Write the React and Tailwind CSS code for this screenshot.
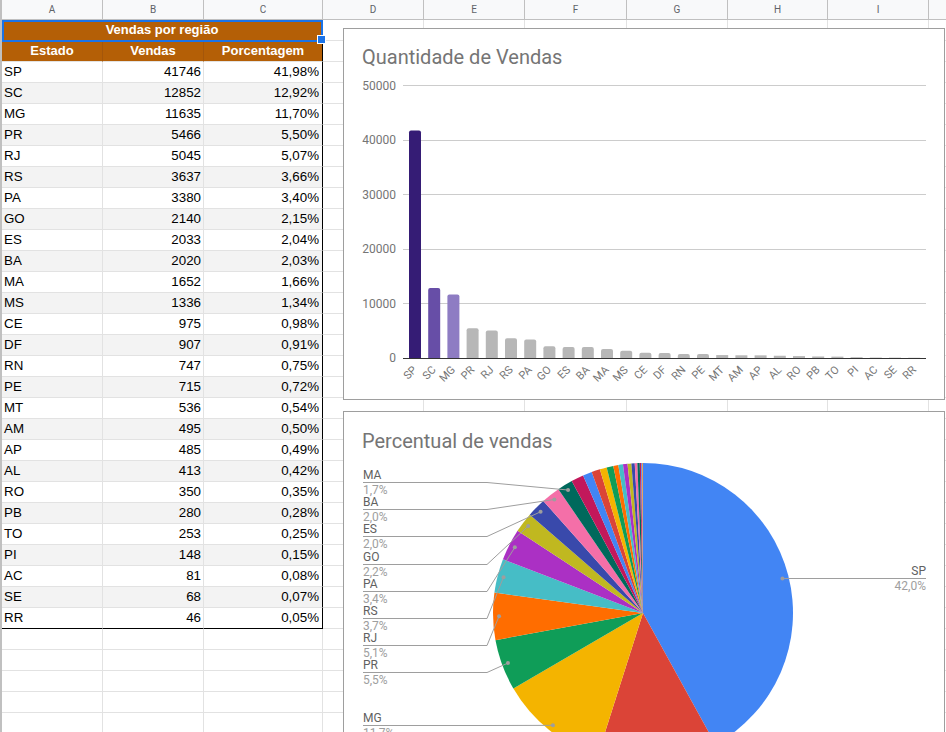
import React from "react";

const DATA = [
  ["SP", 41746, "41,98%"], ["SC", 12852, "12,92%"], ["MG", 11635, "11,70%"], ["PR", 5466, "5,50%"],
  ["RJ", 5045, "5,07%"], ["RS", 3637, "3,66%"], ["PA", 3380, "3,40%"], ["GO", 2140, "2,15%"],
  ["ES", 2033, "2,04%"], ["BA", 2020, "2,03%"], ["MA", 1652, "1,66%"], ["MS", 1336, "1,34%"],
  ["CE", 975, "0,98%"], ["DF", 907, "0,91%"], ["RN", 747, "0,75%"], ["PE", 715, "0,72%"],
  ["MT", 536, "0,54%"], ["AM", 495, "0,50%"], ["AP", 485, "0,49%"], ["AL", 413, "0,42%"],
  ["RO", 350, "0,35%"], ["PB", 280, "0,28%"], ["TO", 253, "0,25%"], ["PI", 148, "0,15%"],
  ["AC", 81, "0,08%"], ["SE", 68, "0,07%"], ["RR", 46, "0,05%"],
];

const RIGHT_COLS = [
  { l: "D", w: "w-[101px]" },
  { l: "E", w: "w-[101px]" },
  { l: "F", w: "w-[102px]" },
  { l: "G", w: "w-[101px]" },
  { l: "H", w: "w-[100px]" },
  { l: "I", w: "w-[101px]" },
];

function EmptyRight() {
  return (
    <>
      {RIGHT_COLS.map((c) => (
        <div key={c.l} className={`${c.w} shrink-0 h-full border-r border-b border-[#e2e2e2] bg-white`} />
      ))}
      <div className="flex-1 h-full border-b border-[#e2e2e2] bg-white" />
    </>
  );
}

function HeaderRow() {
  const cols = [
    { l: "A", w: "w-[101px]" },
    { l: "B", w: "w-[101px]" },
    { l: "C", w: "w-[119px]" },
    ...RIGHT_COLS,
  ];
  return (
    <div className="flex h-[20px] border-b border-[#c0c0c0] bg-[#f8f9fa]">
      {cols.map((c) => (
        <div
          key={c.l}
          className={`${c.w} shrink-0 h-full border-r border-[#c0c0c0] flex items-center justify-center text-[10px] leading-[19px] text-[#5f6368] font-['Roboto',sans-serif]`}
        >
          {c.l}
        </div>
      ))}
      <div className="flex-1 h-full" />
    </div>
  );
}

function TitleRow() {
  return (
    <div className="flex h-[21px]">
      <div className="w-[321px] shrink-0 h-full bg-[#b45f06] border-r border-b border-[#b45f06] text-white font-bold text-[13px] leading-[20px] text-center">
        Vendas por região
      </div>
      <EmptyRight />
    </div>
  );
}

function ColHeadRow() {
  return (
    <div className="flex h-[21px]">
      <div className="w-[101px] shrink-0 h-full bg-[#b45f06] border-r border-b border-r-[#a4560a] border-b-[#e2e2e2] text-white font-bold text-[13px] leading-[20px] text-center">
        Estado
      </div>
      <div className="w-[101px] shrink-0 h-full bg-[#b45f06] border-r border-b border-r-[#a4560a] border-b-[#e2e2e2] text-white font-bold text-[13px] leading-[20px] text-center">
        Vendas
      </div>
      <div className="w-[119px] shrink-0 h-full bg-[#b45f06] border-r border-b border-r-black border-b-[#e2e2e2] text-white font-bold text-[13px] leading-[20px] text-center">
        Porcentagem
      </div>
      <EmptyRight />
    </div>
  );
}

function DataRow({ d, i, last }) {
  const bg = i % 2 === 1 ? "bg-[#f3f3f3]" : "bg-white";
  const bb = last ? "border-b-black" : "border-b-[#e2e2e2]";
  return (
    <div className="flex h-[21px]">
      <div className={`w-[101px] shrink-0 h-full ${bg} border-r border-b border-r-[#e2e2e2] ${bb} text-[13.33px] leading-[20px] text-black pl-[2px]`}>
        {d[0]}
      </div>
      <div className={`w-[101px] shrink-0 h-full ${bg} border-r border-b border-r-[#e2e2e2] ${bb} text-[13.33px] leading-[20px] text-black text-right pr-[2px]`}>
        {d[1]}
      </div>
      <div className={`w-[119px] shrink-0 h-full ${bg} border-r border-b border-r-black ${bb} text-[13.33px] leading-[20px] text-black text-right pr-[3px]`}>
        {d[2]}
      </div>
      <EmptyRight />
    </div>
  );
}

function EmptyRow() {
  return (
    <div className="flex h-[21px]">
      <div className="w-[101px] shrink-0 h-full border-r border-b border-[#e2e2e2] bg-white" />
      <div className="w-[101px] shrink-0 h-full border-r border-b border-[#e2e2e2] bg-white" />
      <div className="w-[119px] shrink-0 h-full border-r border-b border-[#e2e2e2] bg-white" />
      <EmptyRight />
    </div>
  );
}

function BarChart() {
  const k = 0.00545;
  const base = 358;
  const gy = (v) => Math.floor(base - v * k) + 0.5;
  const colors = ["#351c75", "#674ea7", "#8e7cc3"];
  return (
    <svg width="600" height="326" viewBox="344 73 600 326" className="block">
      {[10000, 20000, 30000, 40000, 50000].map((v) => (
        <line key={v} x1="403" x2="926" y1={gy(v)} y2={gy(v)} stroke="#cccccc" strokeWidth="1" />
      ))}
      {[0, 10000, 20000, 30000, 40000, 50000].map((v) => (
        <text key={v} x="396" y={base - v * k + 4.3} textAnchor="end" fontSize="12" fill="#757575" fontFamily="Roboto, sans-serif">
          {v}
        </text>
      ))}
      {DATA.map((d, i) => {
        const cx = 415 + 19.2 * i;
        const x = cx - 6;
        const h = d[1] * k;
        const top = base - h;
        const fill = colors[i] || "#b7b7b7";
        if (h < 3) return <rect key={d[0]} x={x} y={top} width="12" height={h} fill={fill} />;
        return (
          <path
            key={d[0]}
            d={`M${x},${base} V${top + 2} Q${x},${top} ${x + 2},${top} H${x + 10} Q${x + 12},${top} ${x + 12},${top + 2} V${base} Z`}
            fill={fill}
          />
        );
      })}
      <line x1="403" x2="926" y1="358.5" y2="358.5" stroke="#333333" strokeWidth="1" />
      {DATA.map((d, i) => {
        const ax = 415 + 19.2 * i + 2.5;
        const ay = 370.5;
        return (
          <text
            key={d[0]}
            x={ax}
            y={ay}
            textAnchor="end"
            fontSize="11"
            fill="#757575"
            fontFamily="Roboto, sans-serif"
            transform={`rotate(-45 ${ax} ${ay})`}
          >
            {d[0]}
          </text>
        );
      })}
    </svg>
  );
}

const PALETTE = [
  "#4285F4", "#DB4437", "#F4B400", "#0F9D58", "#FF6D00", "#46BDC6",
  "#AB30C4", "#C0B820", "#3949AB", "#F46FA8", "#00695C", "#C2185B",
];

function PieChart() {
  const cx = 643, cy = 613, r = 150;
  const total = DATA.reduce((s, d) => s + d[1], 0);
  const pt = (a, rr) => [cx + rr * Math.sin(a), cy - rr * Math.cos(a)];
  let acc = 0;
  const slices = [];
  const mids = {};
  DATA.forEach((d, i) => {
    const a0 = (acc / total) * Math.PI * 2;
    acc += d[1];
    const a1 = (acc / total) * Math.PI * 2;
    const [x0, y0] = pt(a0, r);
    const [x1, y1] = pt(a1, r);
    const large = a1 - a0 > Math.PI ? 1 : 0;
    slices.push(
      <path
        key={d[0]}
        d={`M${cx},${cy} L${x0},${y0} A${r},${r} 0 ${large} 1 ${x1},${y1} Z`}
        fill={PALETTE[i % 12]}
      />
    );
    mids[d[0]] = pt((a0 + a1) / 2, 144);
  });

  const left = [
    ["MA", 482, "1,7%"],
    ["BA", 509, "2,0%"],
    ["ES", 536, "2,0%"],
    ["GO", 564, "2,2%"],
    ["PA", 591, "3,4%"],
    ["RS", 618, "3,7%"],
    ["RJ", 645, "5,1%"],
    ["PR", 672, "5,5%"],
    ["MG", 725, "11,7%"],
  ];
  const sp = mids["SP"];
  return (
    <svg width="600" height="320" viewBox="344 456 600 320" className="block">
      {slices}
      {left.map(([n, L, p]) => {
        const [dx, dy] = mids[n];
        const y = L + 0.5;
        return (
          <g key={n}>
            <polyline
              points={`363,${y} 487,${y} ${dx},${dy}`}
              fill="none"
              stroke="#9e9e9e"
              strokeWidth="1"
            />
            <circle cx={dx} cy={dy} r="2" fill="#9e9e9e" />
            <text x="363" y={L - 3} fontSize="12" fill="#616161" fontFamily="Roboto, sans-serif">{n}</text>
            <text x="363" y={L + 12} fontSize="12" fill="#9e9e9e" fontFamily="Roboto, sans-serif">{p}</text>
          </g>
        );
      })}
      <line x1={sp[0]} x2="926" y1="578.5" y2="578.5" stroke="#9e9e9e" strokeWidth="1" />
      <circle cx={sp[0]} cy="578.5" r="2" fill="#9e9e9e" />
      <text x="926" y="575" textAnchor="end" fontSize="12" fill="#616161" fontFamily="Roboto, sans-serif">SP</text>
      <text x="926" y="590" textAnchor="end" fontSize="12" fill="#9e9e9e" fontFamily="Roboto, sans-serif">42,0%</text>
    </svg>
  );
}

export default function App() {
  const emptyRows = [30, 31, 32, 33, 34];
  return (
    <div className="relative w-[946px] h-[732px] overflow-hidden bg-white font-['Liberation_Sans',Arial,sans-serif]">
      <div className="border-l-2 border-[#c0c0c0]">
        <HeaderRow />
        <TitleRow />
        <ColHeadRow />
        {DATA.map((d, i) => (
          <DataRow key={d[0]} d={d} i={i} last={i === DATA.length - 1} />
        ))}
        {emptyRows.map((n) => (
          <EmptyRow key={n} />
        ))}
      </div>

      {/* selection */}
      <div className="absolute left-[2px] top-[20px] w-[321px] h-[22px] border-2 border-[#1a73e8]" />
      <div className="absolute left-[318px] top-[36px] w-[7px] h-[7px] bg-[#1a73e8] ring-1 ring-white" />

      {/* chart 1 */}
      <div className="absolute left-[343px] top-[28px] w-[602px] h-[372px] border border-[#9e9e9e] bg-white flex flex-col">
        <div className="h-[44px] shrink-0 pt-[16px] pl-[18px] text-[20px] leading-[24px] text-[#757575] font-['Roboto',sans-serif]">
          Quantidade de Vendas
        </div>
        <BarChart />
      </div>

      {/* chart 2 */}
      <div className="absolute left-[343px] top-[411px] w-[602px] h-[370px] border border-[#9e9e9e] bg-white flex flex-col">
        <div className="h-[44px] shrink-0 pt-[17px] pl-[18px] text-[20px] leading-[24px] text-[#757575] font-['Roboto',sans-serif]">
          Percentual de vendas
        </div>
        <PieChart />
      </div>
    </div>
  );
}
